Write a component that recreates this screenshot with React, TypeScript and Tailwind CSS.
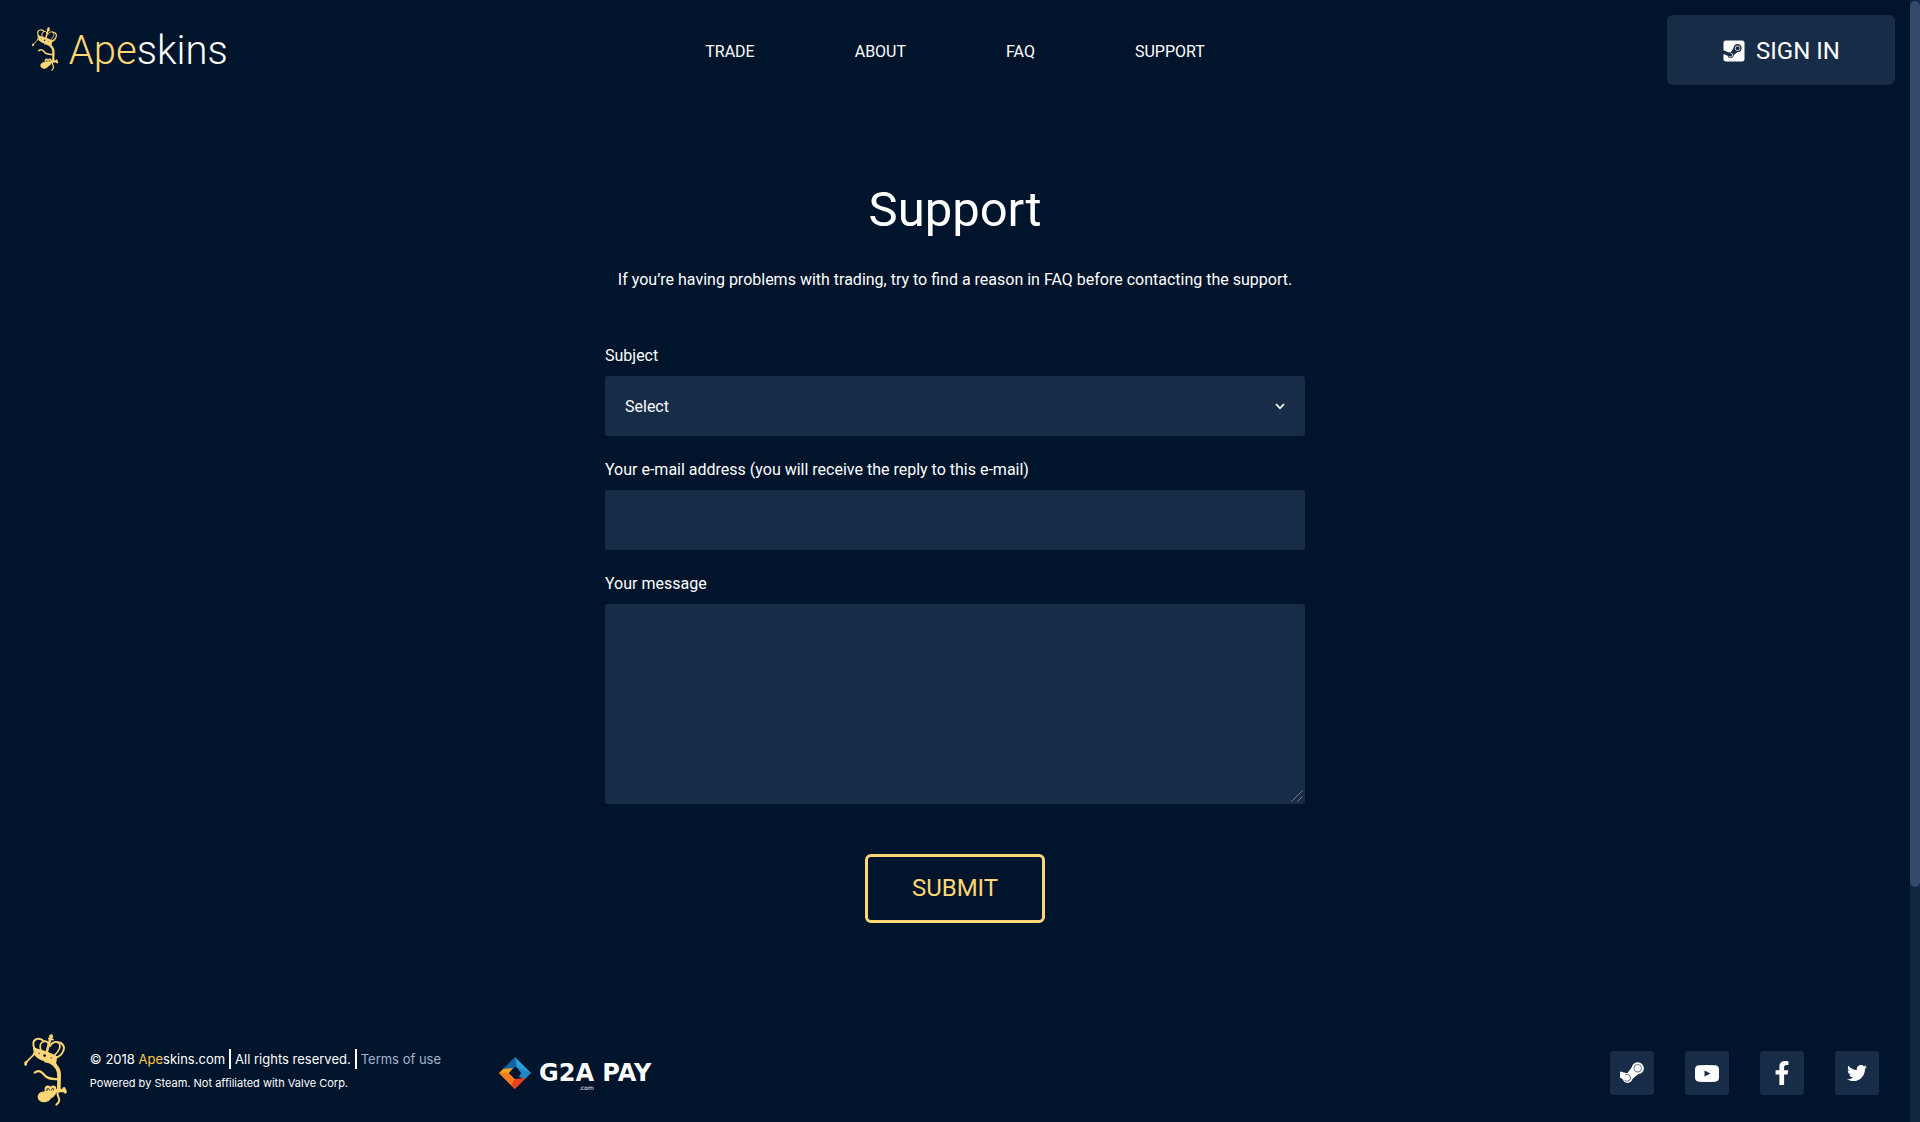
import React, { useState } from "react";
import { FaFacebookF, FaSteamSquare, FaTwitter } from "react-icons/fa";

const navLinks = ["Trade", "About", "FAQ", "Support"];

const subjects = ["Select", "Trading", "Payments", "Other"];

function MonkeyLogo({ className }: { className?: string }) {
  return (
    <svg viewBox="10 11 134 220" className={className} fill="none" stroke="#ffd676" strokeLinecap="round" strokeLinejoin="round" aria-hidden="true">
      {/* Crown */}
      <path d="M44 58 C34 42 38 28 50 26 C58 24 66 28 71 34" strokeWidth="6" />
      <path d="M62 62 C56 48 60 36 71 33 C80 32 84 38 86 44" strokeWidth="5" />
      <path d="M79 68 L91 24" strokeWidth="8" />
      <path d="M90 48 C96 34 110 32 118 40 C124 50 114 66 102 78" strokeWidth="5" />
      <path d="M112 36 C128 36 136 50 130 62 C126 74 118 80 106 84" strokeWidth="6" />
      <circle cx="93" cy="18" r="6" fill="#ffd676" stroke="none" />
      <path d="M86 25 L98 28" strokeWidth="6" />
      <path d="M40 54 C60 60 86 66 110 80 L107 99 C86 99 58 92 43 76 Z" fill="#ffd676" strokeWidth="3" />
      <g fill="#00142c" stroke="none">
        <circle cx="56" cy="70" r="2" />
        <circle cx="73" cy="77" r="4" />
        <circle cx="93" cy="84" r="2" />
      </g>
      {/* Tail */}
      <path d="M42 68 C37 84 20 86 16 102" strokeWidth="5" />
      <path d="M15 98 L15 104" strokeWidth="8" />
      {/* Body and arm */}
      <path d="M74 96 C94 98 102 110 109 120 C116 134 112 160 112 192 L121 184 C119 160 124 134 119 120 C114 108 108 106 105 96 Z" fill="#ffd676" strokeWidth="3" />
      <path d="M43 129 C54 120 64 126 72 136 C82 150 98 148 114 149" strokeWidth="7" />
      {/* Head */}
      <path d="M75 178 C76 168 88 168 90 176 C94 168 106 168 107 178 C110 194 100 202 91 206 C86 218 66 222 57 212 C50 202 54 188 75 188 Z" fill="#ffd676" strokeWidth="4" />
      <path d="M80 184 C78 176 86 175 88 182 M94 182 C94 175 103 175 102 184" stroke="#00142c" strokeWidth="3" />
      <path d="M106 184 L130 184 M132 178 L136 188" strokeWidth="10" />
      <path d="M112 190 C112 202 120 208 117 216 C116 222 111 224 109 227" strokeWidth="6" />
    </svg>
  );
}

function SteamIcon() {
  return (
    <svg viewBox="90 95 73 65" className="w-6" aria-hidden="true">
      <g fill="#fff">
        <circle cx="144" cy="114" r="18.5" />
        <circle cx="113" cy="144" r="15" />
        <path d="M126 111 L112 129 L90 124 V143 L102 149 L126 148 L145 132 Z" />
      </g>
      <g fill="none" stroke="#172c46" strokeWidth="2">
        <circle cx="144" cy="114" r="11.5" />
        <path d="M106 134 A10.5 10.5 0 1 1 104 150" />
      </g>
    </svg>
  );
}

function YoutubeIcon() {
  return (
    <svg viewBox="0 0 24 17" className="w-6" aria-hidden="true">
      <path fill="#fff" fillRule="evenodd" d="M4 0.3 Q12 -0.3 20 0.3 Q24 0.5 24 4.5 V12.5 Q24 16.5 20 16.7 Q12 17.3 4 16.7 Q0 16.5 0 12.5 V4.5 Q0 0.5 4 0.3 Z M9.5 5.5 V11.5 L15.5 8.5 Z" />
    </svg>
  );
}

function G2APay() {
  return (
    <a href="#g2a" className="flex items-center gap-2 text-white">
      <svg viewBox="0 0 32 32" className="size-8" aria-hidden="true">
        <path fill="#0f67a8" d="M16 0 L4 12 L10 16 L16 10 L20 12 Z" />
        <path fill="#2a9fd8" d="M16 0 L32 16 L22 16 L18 10 Z" />
        <path fill="#2385c4" d="M32 16 L26 22 L20 20 L22 16 L18 10 Z" />
        <path fill="#f9a01b" d="M0 16 L4 12 L14 11 L10 16 L14 25 L16 32 Z" />
        <path fill="#f47b20" d="M0 16 L10 16 L16 22 L16 32 Z" />
        <path fill="#e8431c" d="M16 32 L27 21 L16 22 L12 28 Z" />
        <path fill="#00142c" d="M16 10 L22 16 L16 22 L10 16 Z" />
      </svg>
      <span className="relative font-['DejaVu_Sans',sans-serif] text-2xl leading-6 font-bold">
        G2A PAY
        <span className="absolute top-full left-10 text-[6px] leading-none font-normal">.com</span>
      </span>
    </a>
  );
}

const socials = [
  { name: "Steam", icon: <SteamIcon /> },
  { name: "YouTube", icon: <YoutubeIcon /> },
  { name: "Facebook", icon: <FaFacebookF className="size-6" /> },
  { name: "Twitter", icon: <FaTwitter className="size-5" /> }
];

export default function App() {
  const [subject, setSubject] = useState("Select");
  const [email, setEmail] = useState("");
  const [message, setMessage] = useState("");

  return (
    <div className="flex min-h-screen bg-[#00142c] font-[Roboto,sans-serif] text-base text-white">
      <div className="flex flex-1 flex-col">
        {/* Header */}
        <header className="flex items-center py-[15px]">
          <div className="flex-1">
            <a href="#home" className="inline-flex items-center gap-2.5 pl-8">
              <MonkeyLogo className="h-11" />
              <span className="pt-1 text-[40px] leading-[50px] font-light">
                <span className="text-[#ffd676]">Ape</span>skins
              </span>
            </a>
          </div>
          <nav className="flex gap-[100px] pt-1">
            {navLinks.map((link) => (
              <a key={link} href={`#${link.toLowerCase()}`} className="uppercase">
                {link}
              </a>
            ))}
          </nav>
          <div className="flex flex-1 justify-end">
            <button className="mr-[15px] flex h-[70px] w-[228px] cursor-pointer items-center justify-center gap-2.5 rounded-md bg-[#172c46] pt-0.5 text-2xl">
              <FaSteamSquare className="size-6" />
              SIGN IN
            </button>
          </div>
        </header>

        {/* Support form */}
        <main className="mx-auto w-full max-w-[700px] pt-20 pb-24">
          <h1 className="text-center text-[49px] leading-[60px]">Support</h1>
          <p className="mt-7 text-center">
            If you’re having problems with trading, try to find a reason in FAQ before contacting the support.
          </p>

          <form className="mt-[52px]" onSubmit={(e) => e.preventDefault()}>
            <div className="flex flex-col gap-[22px]">
              <div className="flex flex-col gap-2">
                <label htmlFor="subject">Subject</label>
                <div className="relative">
                  <select
                    id="subject"
                    value={subject}
                    onChange={(e) => setSubject(e.target.value)}
                    className="block h-[60px] w-full appearance-none rounded-[3px] bg-[#172c46] px-5 pt-0.5 outline-none"
                  >
                    {subjects.map((s) => (
                      <option key={s}>{s}</option>
                    ))}
                  </select>
                  <svg viewBox="0 0 10 8" className="pointer-events-none absolute top-1/2 right-5 w-2.5 -translate-y-1/2" aria-hidden="true">
                    <path d="M1 2 L5 6.3 L9 2" fill="none" stroke="#fff" strokeWidth="1.8" />
                  </svg>
                </div>
              </div>
              <div className="flex flex-col gap-2">
                <label htmlFor="email">Your e-mail address (you will receive the reply to this e-mail)</label>
                <input
                  id="email"
                  type="email"
                  value={email}
                  onChange={(e) => setEmail(e.target.value)}
                  className="h-[60px] rounded-[3px] bg-[#172c46] px-5 outline-none"
                />
              </div>
              <div className="flex flex-col gap-2">
                <label htmlFor="message">Your message</label>
                <div className="relative">
                  <textarea
                    id="message"
                    value={message}
                    onChange={(e) => setMessage(e.target.value)}
                    className="block h-[200px] w-full resize-none rounded-[3px] bg-[#172c46] p-5 outline-none"
                  />
                  <svg viewBox="0 0 12 12" className="pointer-events-none absolute right-0.5 bottom-0.5 size-3" aria-hidden="true">
                    <path d="M0.5 11.5 L11.5 0.5 M6.5 11.5 L11.5 6.5" stroke="#70809a" />
                  </svg>
                </div>
              </div>
            </div>
            <button
              type="submit"
              className="mx-auto mt-[50px] block h-[69px] w-[180px] cursor-pointer rounded-md border-3 border-[#ffd676] pb-0.5 text-2xl text-[#ffd676]"
            >
              SUBMIT
            </button>
          </form>
        </main>

        {/* Footer */}
        <footer className="mt-auto flex h-[98px] items-center pr-[31px] pl-6">
          <div className="flex items-center gap-[22px] pb-1.5 font-[Inter,sans-serif]">
            <MonkeyLogo className="h-[72px]" />
            <div className="pt-0.5">
              <p className="flex items-center text-[13px] leading-5">
                <span>© 2018 <span className="text-[#ffc94f]">Ape</span>skins.com</span>
                <span className="ml-1 border-l-2 border-white pl-1">All rights reserved.</span>
                <a href="#terms" className="ml-1 border-l-2 border-white pl-1 text-[#a3b5cf]">
                  Terms of use
                </a>
              </p>
              <p className="mt-1 text-[11px] leading-5">Powered by Steam. Not affiliated with Valve Corp.</p>
            </div>
          </div>
          <div className="ml-[58px]">
            <G2APay />
          </div>
          <div className="ml-auto flex gap-[31px]">
            {socials.map((social) => (
              <a
                key={social.name}
                href={`#${social.name.toLowerCase()}`}
                aria-label={social.name}
                className="flex size-11 items-center justify-center rounded-[3px] bg-[#172c46]"
              >
                {social.icon}
              </a>
            ))}
          </div>
        </footer>
      </div>

      {/* Scroll track */}
      <div className="w-2.5 bg-[#102641]">
        <div className="mt-px h-[79%] rounded-full bg-[#344a66]"></div>
      </div>
    </div>
  );
}
